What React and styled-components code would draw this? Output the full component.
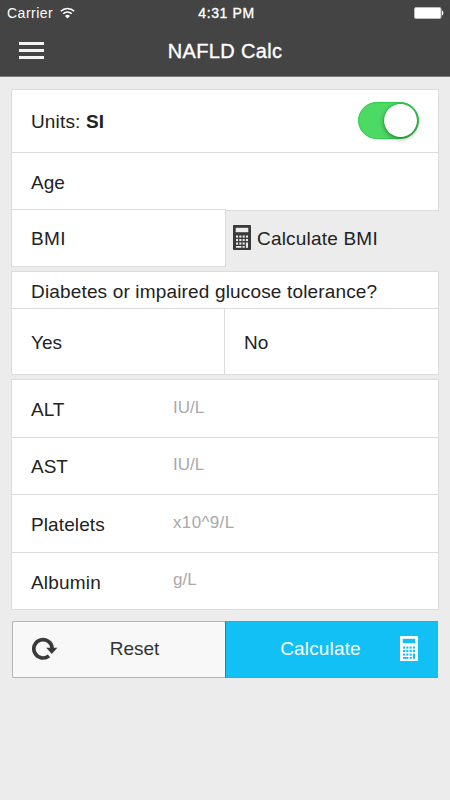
import React, { useState } from "react";

import styled, { createGlobalStyle, css } from "styled-components";

const colors = {
  bar: "#444444",
  page: "#ececec",
  line: "#dcdcdc",
  text: "#222222",
  icon: "#3a3a3a",
  unit: "#a9a9a9",
  blue: "#12c0f5",
  green: "#4cd964",
}

const GlobalStyle = createGlobalStyle`
  * {
    box-sizing: border-box;
  }

  body {
    margin: 0;
    background-color: ${colors.page};
    color: ${colors.text};
    font-family: "Liberation Sans", Arial, sans-serif;
  }
`

const Screen = styled.div`
  width: 450px;
  height: 800px;
  overflow: hidden;
  background-color: ${colors.page};
`

const Header = styled.header`
  height: 77px;
  background-color: ${colors.bar};
  border-bottom: 1px solid #7c7c7c;
  color: white;
`

const StatusBar = styled.div`
  display: grid;
  grid-template-columns: 1fr auto 1fr;
  align-items: center;
  height: 24px;
  padding: 0 6px 0 7px;
  font-size: 14px;
  line-height: 24px;
`

const Carrier = styled.div`
  display: flex;
  align-items: center;
  gap: 7px;
  letter-spacing: 0.5px;
`

const Time = styled.div`
  padding: 1px 0 0 2px;
  font-size: 14px;
  -webkit-text-stroke: 0.35px white;
  letter-spacing: 0.6px;
`

const Battery = styled.svg`
  justify-self: end;
`

const NavBar = styled.nav`
  display: grid;
  grid-template-columns: 1fr auto 1fr;
  align-items: center;
  height: 53px;
  padding: 0 19px;

  h1 {
    margin: 0;
    padding-top: 1px;
    font-size: 20px;
    font-weight: normal;
    line-height: 24px;
    letter-spacing: 0.35px;
    -webkit-text-stroke: 0.35px white;
  }
`

const MenuButton = styled.button`
  display: flex;
  flex-direction: column;
  justify-content: space-between;
  width: 25px;
  height: 17px;
  padding: 0;
  border: 0;
  background: none;

  span {
    height: 3px;
    background-color: #f4f4f4;
  }
`

const Form = styled.main`
  display: flex;
  flex-direction: column;
  padding: 12px 11px 0 11px;
`

const Card = styled.section`
  border: 1px solid ${colors.line};
  background-color: white;
  margin-top: ${props => props.gap || 0}px;
`

const Row = styled.div`
  display: flex;
  align-items: center;
  height: ${props => props.height}px;
  padding: ${props => props.shift || 0}px 19px 0 19px;

  & + & {
    border-top: 1px solid ${colors.line};
  }
`

const Label = styled.label`
  font-size: 19px;
  line-height: 24px;
  white-space: nowrap;
  letter-spacing: ${props => props.spacing || 0}px;

  ${props =>
    props.column &&
    css`
      width: 142px;
    `}
`

const Unit = styled.span`
  margin-top: -5px;
  font-size: 17px;
  line-height: 22px;
  color: ${colors.unit};
  letter-spacing: ${props => props.spacing || 0}px;
`

const Switch = styled.button`
  display: flex;
  align-items: center;
  justify-content: ${props => (props.on ? "flex-end" : "flex-start")};
  width: 61px;
  height: 37px;
  margin: -2px 0 0 auto;
  padding: 0 1px;
  border: 1px solid ${props => (props.on ? "#25d04b" : colors.line)};
  border-radius: 19px;
  background-color: ${props => (props.on ? colors.green : "white")};
`

const Knob = styled.span`
  width: 33px;
  height: 33px;
  border-radius: 50%;
  background-color: white;
  box-shadow: 0 2px 5px rgba(0, 0, 0, 0.35), 0 0 1px 0.5px rgba(0, 120, 30, 0.5);
`

const BmiRow = styled.div`
  display: flex;
  margin-top: -2px;
`

const BmiField = styled(Card)`
  width: 215px;
`

const BmiLink = styled.a`
  display: flex;
  align-items: center;
  gap: 6px;
  padding: 1px 0 0 7px;

  svg {
    margin-bottom: 3px;
  }
`

const Choices = styled.div`
  display: grid;
  grid-template-columns: 212px 1fr;
  border-top: 1px solid ${colors.line};
`

const Choice = styled.div`
  display: flex;
  align-items: center;
  height: 65px;
  padding-left: 19px;
  padding-top: 2px;

  & + & {
    border-left: 1px solid ${colors.line};
  }
`

const Actions = styled.div`
  display: flex;
  height: 57px;
  margin: 11px 1px 0 1px;
`

const Action = styled.button`
  display: grid;
  grid-template-columns: 26px 1fr 14px;
  align-items: center;
  width: 213px;
  padding: 0 0 2px 19px;
  border: 1px solid #b4b4b4;
  border-radius: 2px 0 0 2px;
  border-right: 0;
  background-color: #f8f8f8;
  color: #333333;
  font-family: inherit;
  font-size: 19px;
  line-height: 24px;
  letter-spacing: 0;

  ${props =>
    props.primary &&
    css`
      grid-template-columns: 5px 1fr 26px;
      padding: 0 19px 2px 18px;
      border: 1px solid #38a9cd;
      border-left-color: #0b8fba;
      border-right-color: ${colors.blue};
      border-radius: 0;
      background-color: ${colors.blue};
      color: white;
      letter-spacing: 0.15px;
    `}
`

const ActionIcon = styled.span`
  display: flex;
  justify-content: flex-end;
`

const WifiIcon = () => (
  <svg width="15" height="12" viewBox="0 0 15 12" fill="none" stroke="white">
    <path d="M0.8 4.2a9.5 9.5 0 0 1 13.4 0" strokeWidth="1.6" />
    <path d="M3.2 6.8a6.1 6.1 0 0 1 8.6 0" strokeWidth="1.6" />
    <path d="M7.5 11.6l-2.5-2.6a3.6 3.6 0 0 1 5 0z" fill="white" stroke="none" />
  </svg>
)

const BatteryIcon = () => (
  <Battery width="30" height="12" viewBox="0 0 30 12">
    <rect x="0.5" y="0.5" width="26.5" height="11" rx="1.5" fill="white" stroke="#bdbdbd" />
    <path d="M28 3.5c1.8 0.6 1.8 4.4 0 5z" fill="white" />
  </Battery>
)

const keys = [
  [3, 10.5], [6.3, 10.5], [9.6, 10.5], [12.9, 10.5],
  [3, 14], [6.3, 14], [9.6, 14], [12.9, 14],
  [3, 17.5], [6.3, 17.5], [9.6, 17.5],
]

const CalculatorIcon = ({ color, hole }) => (
  <svg width="18" height="25" viewBox="0 0 18 25">
    <rect width="18" height="25" rx="0.8" fill={color} />
    <g fill={hole}>
      <rect x="2.7" y="2.8" width="12.6" height="4.4" />
      {keys.map(([x, y]) => (
        <rect key={`${x}-${y}`} x={x} y={y} width="2.1" height="2.1" />
      ))}
      <rect x="3" y="21" width="5.4" height="1.8" />
      <rect x="9.6" y="21" width="2.1" height="1.8" />
      <rect x="12.9" y="17.5" width="2.1" height="5.3" />
    </g>
  </svg>
)

const ResetIcon = () => (
  <svg width="26" height="23" viewBox="0 0 26 23">
    <path
      d="M17 18.8A9.2 9.2 0 1 1 20.2 11"
      fill="none"
      stroke={colors.icon}
      strokeWidth="3.7"
    />
    <path d="M14.2 10.8H25.4L19.8 17z" fill={colors.icon} />
  </svg>
)

const labs = [
  { name: "ALT", unit: "IU/L", height: 57, shift: 3 },
  { name: "AST", unit: "IU/L", height: 57, shift: 2 },
  { name: "Platelets", unit: "x10^9/L", height: 58, shift: 3, spacing: 0.1, unitSpacing: 0.35 },
  { name: "Albumin", unit: "g/L", height: 57, shift: 3, spacing: 0.2 },
]

const App = () => {
  const [si, setSi] = useState(true)

  return (
    <Screen>
      <GlobalStyle />
      <Header>
        <StatusBar>
          <Carrier>Carrier <WifiIcon /></Carrier>
          <Time>4:31 PM</Time>
          <BatteryIcon />
        </StatusBar>
        <NavBar>
          <MenuButton aria-label="Menu"><span /><span /><span /></MenuButton>
          <h1>NAFLD Calc</h1>
        </NavBar>
      </Header>

      <Form>
        <Card>
          <Row height={62} shift={1}>
            <Label spacing={0.15}>Units: <b>{si ? "SI" : "US"}</b></Label>
            <Switch on={si} aria-label="Units" onClick={() => setSi(!si)}><Knob /></Switch>
          </Row>
          <Row height={58} shift={3}>
            <Label>Age</Label>
          </Row>
        </Card>
        <BmiRow>
          <BmiField>
            <Row height={56} shift={2}>
              <Label spacing={0.4}>BMI</Label>
            </Row>
          </BmiField>
          <BmiLink>
            <CalculatorIcon color={colors.icon} hole={colors.page} />
            <Label spacing={0.2}>Calculate BMI</Label>
          </BmiLink>
        </BmiRow>

        <Card gap={4}>
          <Row height={36} shift={4}>
            <Label spacing={0.16}>Diabetes or impaired glucose tolerance?</Label>
          </Row>
          <Choices>
            <Choice><Label>Yes</Label></Choice>
            <Choice><Label>No</Label></Choice>
          </Choices>
        </Card>

        <Card gap={4}>
          {labs.map(lab => (
            <Row key={lab.name} height={lab.height} shift={lab.shift}>
              <Label column spacing={lab.spacing}>{lab.name}</Label>
              <Unit spacing={lab.unitSpacing}>{lab.unit}</Unit>
            </Row>
          ))}
        </Card>

        <Actions>
          <Action>
            <ResetIcon />
            <span>Reset</span>
          </Action>
          <Action primary>
            <span />
            <span>Calculate</span>
            <ActionIcon><CalculatorIcon color="white" hole={colors.blue} /></ActionIcon>
          </Action>
        </Actions>
      </Form>
    </Screen>
  )
}

export default App
